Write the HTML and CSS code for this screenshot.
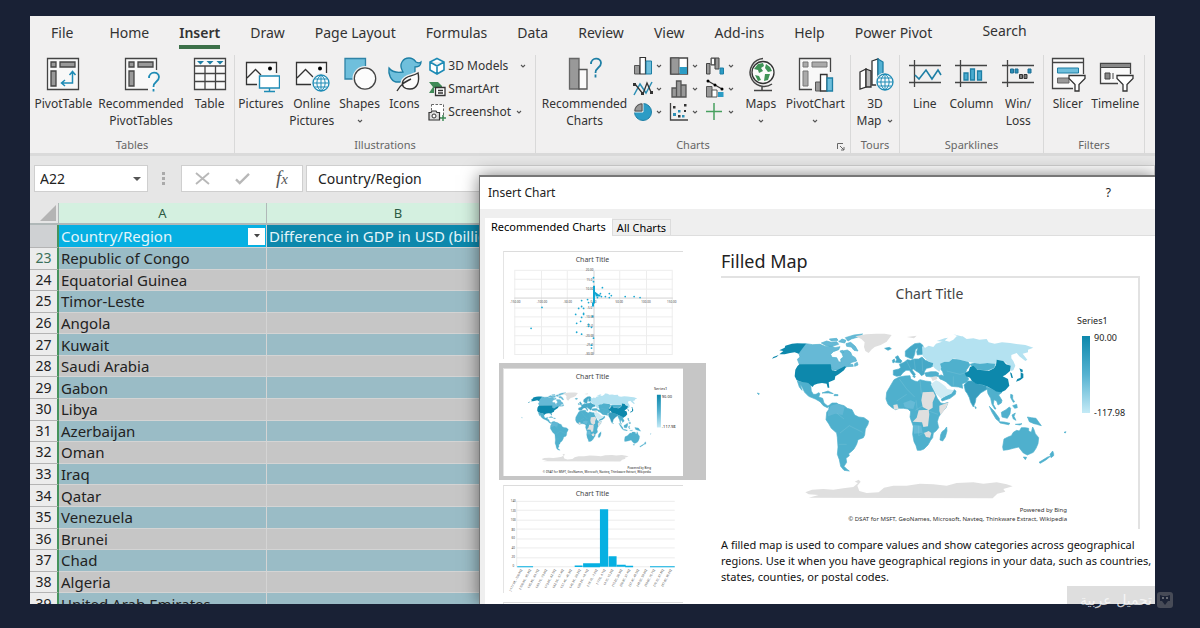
FILE: index.html
```html
<!DOCTYPE html>
<html lang="en">
<head>
<meta charset="utf-8">
<title>Insert Chart</title>
<link rel="stylesheet" href="styles.css">
</head>
<body>
<svg class="defs" aria-hidden="true">
  <symbol id="chev" viewBox="0 0 8 6"><path d="M2 2l2 2 2-2" fill="none" stroke="#555" stroke-width="1.1"/></symbol>
  <symbol id="globe" viewBox="0 0 18 18"><circle cx="9" cy="9" r="8" fill="#f4fafc" stroke="#1e8bb5" stroke-width="1.3"/><path d="M1 9h16M9 1v16M2.5 5h13M2.5 13h13M9 1C3.500 5 3.500 13 9 17M9 1c5.500 4 5.500 12 0 16" fill="none" stroke="#1e8bb5"/></symbol>
  <symbol id="world" viewBox="0 0 1020 600">
    <g fill="#4fb0cd" stroke="#4fb0cd" stroke-width="2" stroke-linejoin="round">
      <path fill="#66b9d6" d="M176 100L198 98 218 101 240 100 258 107 272 104 285 110 300 107 296 116 280 122 272 130 276 139 290 140 296 152 303 154 302 144 310 138 306 128 308 120 322 117 332 124 336 134 346 140 350 150 336 154 326 161 338 160 340 166 322 167 312 170 298 176 278 178 272 162 178 160 172 145 180 138 176 126Z"/>
      <path fill="#66b9d6" d="M244 96l16-6 14 4 16-2 6 8-20 6-18-2zM268 84l22-2 4 6-20 2zM296 92l10-8 12 4-4 8zM316 80l26-8 26-3-14 9-20 6-10 6zM318 98l14-4 14 12 8 14-12-2-8-10-14-2zM300 120l8-2 4 6-8 2zM344 158l8-4 2 8-10 4z"/>
      <path d="M172 210L188 214 204 216 212 222 214 240 220 250 228 250 236 245 240 248 236 258 248 262 252 276 262 284 270 284 262 290 250 284 240 272 226 264 206 256 194 244 186 228 180 218 186 238 178 228ZM246 246l18-6 16 8-14-2zM284 250l10 1v3h-12z"/>
      <path d="M268 282L276 276 290 276 296 280 312 284 322 292 336 296 344 312 356 318 372 320 386 330 384 340 376 354 374 372 370 380 354 386 350 400 342 414 336 420 326 428 328 434 318 442 320 454 312 466 320 474 328 480 312 478 302 466 298 446 292 430 294 408 292 380 290 366 274 352 266 338 258 326 260 304 266 296Z"/>
      <path fill="#62b7d4" stroke="none" d="M272 284l20-6 22 10-6 24-22-4-22 8 0-14z"/>
      <path d="M462 206L470 202 478 198 494 195 510 194 512 204 524 210 532 212 540 206 556 210 572 212 576 228 584 244 592 262 602 276 612 278 624 274 618 290 604 306 596 318 592 332 596 350 588 360 580 366 578 380 572 388 564 402 552 414 542 418 532 418 528 404 522 392 518 370 520 346 514 330 510 318 512 302 504 294 490 292 478 292 466 296 456 290 444 280 438 264 440 244 448 230ZM606 362l8-6 6-8 1 12-5 18-8 12-8-3 2-16z"/>
      <path fill="#66bad6" stroke="none" d="M490 276l22-8 14 6-6 20-16-2-10-4zM520 342l24 2 4 22-26 2z"/>
      <path fill="#45a8c7" d="M460 178L476 174 482 170 478 160 492 154 502 146 512 148 522 144 536 144 546 138 556 148 568 152 580 156 578 166 570 170 560 172 554 180 552 190 544 194 538 186 528 180 520 174 516 176 526 190 522 196 514 186 508 178 498 178 488 186 482 194 470 196 460 192ZM466 154l4-8-4-8 8-4 4 8 8 8-4 6zM457 148l6-4 2 8-6 4zM496 136l0-16 14-12 14-10 16-2 8 6 4 14-4 14-16 2-2-10 4-12-8 6-2 14-6 14-8-2zM434 112l14-3 6 4-10 5zM518 196l8 0-2 4z"/>
      <path d="M554 186L572 182 588 182 596 186 594 196 578 198 558 196ZM600 158L614 152 625 152 636 144 660 146 684 152 690 162 680 176 676 188 686 204 680 214 666 218 668 232 656 228 634 226 626 220 618 212 606 206 600 204 594 194 604 192 612 196 608 182 602 174ZM604 264l30-18 8-10 6 4-2 10-16 12-24 8z"/>
      <path d="M690 160L704 156 720 158 742 156 766 158 762 170 744 178 716 176 700 170Z"/>
      <path fill="#379dbe" d="M672 222L684 210 696 210 712 218 738 224 742 234 732 240 722 246 708 262 706 274 700 288 692 274 688 260 682 248 676 240ZM704 286l5 4-2 3z"/>
      <path d="M740 228L756 234 772 242 786 244 776 252 786 268 784 276 774 282 770 270 762 266 760 280 768 294 764 294 756 280 752 262 744 248ZM748 286l14 14 16 22 0 10-10-8-12-20zM784 304l14-8 10-8 4 4-2 16-8 14-16-4zM778 332l14 1 18 4-4 4-26-5zM816 312l10-6-4 10 6 12-8-4zM826 340l20-2-6 4zM862 318l12 2 14 2 10 14 6 8-14-4-8-2-14-6-4-10zM812 250l6 2 0 12 6 8-4 2-8-14zM818 284l12-4 2 10-8 2z"/>
      <path d="M792 384L804 378 814 374 820 364 830 358 838 360 844 350 856 350 866 352 866 360 874 364 878 348 882 356 886 368 896 380 894 398 888 412 880 424 862 432 850 426 842 416 836 408 820 412 804 416 790 418 788 408ZM850 438l10 1-4 7zM897 454l26-16 8-2-12 10-18 11zM930 430l8-10 3 8 0 6-8 6z"/>
      <path d="M52 246l6 2-2 3zM972 364l6-2-2 4z"/>
    </g>
    <g fill="#b4e2f1"><path d="M546 106L556 110 566 104 580 108 588 98 602 94 612 88 628 92 640 86 650 76 668 76 680 84 700 82 718 86 740 84 746 94 764 98 786 94 810 96 836 100 856 102 880 110 864 116 864 124 848 128 862 146 856 150 838 136 830 126 814 132 814 142 820 150 826 164 820 178 812 180 808 164 790 150 770 148 766 158 742 156 720 158 704 156 684 152 660 146 640 142 628 152 612 152 600 158 604 170 598 182 584 172 578 164 580 156 566 152 548 136ZM590 90l24-8 10-2-14 12zM640 70l24 6 0 4z"/><path fill="#cfebf4" d="M572 220L588 208 598 212 616 226 622 234 642 238 634 248 602 262 588 248Z"/></g>
    <g fill="#0d88ac"><path d="M198 98L180 122 176 128 164 124 150 126 134 130 118 130 130 120 118 118 134 110 136 104 156 98 172 97ZM100 138l16-6-6 6-14 5z"/><path d="M178 160L272 160 276 178 286 180 298 174 314 166 318 168 312 178 296 190 286 196 284 206 266 214 268 230 263 230 260 218 246 216 232 218 222 222 218 228 204 216 188 214 170 208 164 196 166 176 172 166Z"/><path d="M674 186L686 180 690 168 700 164 712 176 730 178 746 180 762 172 768 162 770 146 790 150 798 160 812 164 810 180 796 192 788 196 804 204 808 224 796 238 784 244 770 242 756 234 740 226 730 222 708 218 696 210 690 200 678 196ZM838 172l10 4 0 8-6-2zM842 184l8 4 0 12-10 8-12 4 4-8 10-4zM810 184l5 3 4 14-5-1z"/></g>
    <g fill="#dfdfdf"><path d="M346 76L378 70 408 68 434 68 455 72 446 84 440 92 422 102 404 108 394 116 386 126 376 120 372 108 374 94 364 84ZM500 78l30-4-8 8zM548 244L580 242 586 254 578 274 578 290 566 298 548 288 544 268ZM536 298L566 296 568 310 564 346 550 348 546 334 518 332 530 320ZM598 284L626 274 618 290 602 312 598 300ZM460 282l12-2 4 14-14 2zM552 366l14-6 8 6-4 14-12-2zM572 198l18-2 2 8-14 6zM196 544L216 536 250 534 280 536 310 532 340 528 354 516 344 512 356 506 362 512 352 524 358 540 380 546 416 544 432 530 460 524 500 524 540 518 580 520 620 524 650 516 700 514 730 518 770 514 800 520 818 526 790 534 796 542 772 548 758 562 206 560 236 552 206 550Z"/></g>
    <g fill="none" stroke="#fff" stroke-opacity=".2" stroke-width="1.500"><path d="M478 204l22 30 24 24M540 208l4 40M500 250l-30 20M526 298l20-12M536 344v30l20-10M292 308l20 16M300 366l28-22 40 20M296 400l24 0M500 150l12 24M522 144l4 32M546 140l2 40M620 180l40 10 22-6M640 196l0 28M528 268l4 30M566 300l28 10"/></g>
  </symbol>
</svg>

<main class="window">
  <nav class="tabs" aria-label="Ribbon tabs">
    <a href="#">File</a><a href="#">Home</a><a href="#" class="on" aria-current="page">Insert</a><a href="#">Draw</a><a href="#">Page Layout</a><a href="#">Formulas</a><a href="#">Data</a><a href="#">Review</a><a href="#">View</a><a href="#">Add-ins</a><a href="#">Help</a><a href="#">Power Pivot</a><a href="#" class="search">Search</a>
  </nav>

  <div class="ribbon">
    <section class="group tables">
      <div class="tools">
        <button class="tool"><svg viewBox="0 0 38 38" class="big"><g fill="#f8f8f8" stroke="#444" stroke-width="1.300"><path d="M3.500 2.500h31v31h-31z"/><path fill="#999" d="M7 6h5v5H7zM16 6h15v5H16zM7 15h5v15H7z"/></g><path d="M28.500 16v11H18M25.500 19l3-3.500 3 3.500M21 24l-3.500 3 3.500 3" fill="none" stroke="#1e8bb5" stroke-width="1.500"/></svg>PivotTable</button>
        <button class="tool"><svg viewBox="0 0 38 38" class="big"><g fill="#f8f8f8" stroke="#444" stroke-width="1.300"><path stroke="none" d="M3 3h31v31H3z"/><path fill="none" d="M34.500 14V2.500h-31v31H26"/><path fill="#999" d="M7 6h5v5H7zM16 6h15v5H16zM7 15h5v15H7z"/></g><path d="M27 22c0-7 10-7 10-1 0 5-5.500 4-5.500 10M31.500 33v2.500" fill="none" stroke="#1e8bb5" stroke-width="1.800"/></svg><span>Recommended<br>PivotTables</span></button>
        <button class="tool"><svg viewBox="0 0 38 38" class="big"><path fill="#fafafa" stroke="#444" stroke-width="1.300" d="M3.500 2.500h31v31h-31zM3.500 10h31M3.500 17.500h31M3.500 25.500h31M14 10v23M24.500 10v23"/><path fill="#1e7fa5" d="M6 5h7l-3.500 3.500zM15.500 5h7L19 8.500zM25.500 5h7L29 8.500z"/></svg>Table</button>
      </div>
      <h2>Tables</h2>
    </section>

    <section class="group illus">
      <div class="tools">
        <button class="tool"><svg viewBox="0 0 38 38" class="big"><path fill="#fafafa" stroke="#333" stroke-width="1.300" d="M15 28.500H4.500v-22h30V17M5 22l8.500-8.500L19 19"/><circle cx="28" cy="12.500" r="2"/><path fill="#fff" stroke="#1e8bb5" stroke-width="1.400" d="M17.500 20h20v12h-20zM27.500 32v3.500M22 35.500h11"/></svg>Pictures</button>
        <button class="tool"><svg viewBox="0 0 38 38" class="big"><path fill="#fafafa" stroke="#333" stroke-width="1.300" d="M18 28.500H3.500v-22h30V17M4 22l8.500-8.500L20 21"/><circle cx="27" cy="12.500" r="2"/><circle cx="28" cy="27" r="10" fill="#f1f0f0"/><use href="#globe" x="19" y="18" width="18" height="18"/></svg><span>Online<br>Pictures</span></button>
        <button class="tool"><svg viewBox="0 0 38 38" class="big"><path fill="#6fbfdc" stroke="#2f83a6" stroke-width="1.300" d="M4 2.500h20.500V23H4z"/><circle cx="24" cy="22.500" r="12.500" fill="#f1f0f0"/><circle cx="24" cy="22.500" r="10.700" fill="#fcfcfc" stroke="#444" stroke-width="1.300"/></svg>Shapes<svg class="chev"><use href="#chev"/></svg></button>
        <button class="tool"><svg viewBox="0 0 38 38" class="big"><path fill="#6fbfdc" stroke="#1e7fa5" stroke-width="1.300" d="M17 14c-3-6 1-12 7-12 5 0 6 3 7 4 2 1 4 1 5 0 0 4-3 5-6 5v6l-7 9H11C6 25 3 18 4 12c3 4 8 5 14 4z"/><path fill="#fcfcfc" stroke="#f1f0f0" stroke-width="4" d="M33 17c2 9-1 16-8 16-6 0-9-3-7-8 3-6 9-4 15-8z"/><path fill="#fcfcfc" stroke="#333" stroke-width="1.400" d="M33 17c2 9-1 16-8 16-6 0-9-3-7-8 3-6 9-4 15-8zM12 35c4-7 8-9 14-12"/></svg>Icons</button>
        <div class="rows">
          <button><svg viewBox="0 0 18 18"><path fill="#fff" stroke="#1e8bb5" stroke-width="1.600" d="M9 1.500l7 3.500v8l-7 4-7-4V5zM2 5l7 4 7-4M9 9v8"/></svg>3D Models<svg class="chev"><use href="#chev"/></svg></button>
          <button><svg viewBox="0 0 18 18"><path fill="#3f8a57" d="M1 2h9l4 4v2H6v5H1l4-6z"/><path fill="#fff" stroke="#333" stroke-width="1.300" d="M7.500 7.500h9.500v8H7.500zM10 10.500h5M10 13h5"/></svg>SmartArt</button>
          <button><svg viewBox="0 0 18 18"><path fill="#fff" stroke="#666" stroke-dasharray="2.500 1.500" d="M3.500 1.500h12v13h-12z"/><path fill="#ddd" stroke="#333" stroke-width="1.200" d="M1 9.500h2l1-1.500h4l1 1.500h2.500V17H1z"/><circle cx="6" cy="13" r="2" fill="#fff" stroke="#333"/><path stroke="#3f8a57" stroke-width="1.500" d="M15 12v6M12 15h6"/></svg>Screenshot<svg class="chev near"><use href="#chev"/></svg></button>
        </div>
      </div>
      <h2>Illustrations</h2>
    </section>

    <section class="group charts">
      <div class="tools">
        <button class="tool"><svg viewBox="0 0 38 38" class="big"><path fill="#999" stroke="#666" stroke-width="1.300" d="M3.500 2.500H13V33H3.500z"/><path fill="#fafafa" stroke="#555" stroke-width="1.300" d="M13 13.500h8V33h-8z"/><path d="M25 8c0-7 10-7 10-1 0 5-5.500 4-5.500 10M29.500 18.500v3" fill="none" stroke="#1e7fa5" stroke-width="1.800"/></svg><span>Recommended<br>Charts</span></button>
        <div class="kinds">
          <button aria-label="Column chart"><svg viewBox="0 0 20 20"><path fill="#999" stroke="#555" d="M1.500 9.500h5V18h-5z"/><path fill="#fff" stroke="#333" stroke-width="1.200" d="M7 1.500h5.500V18H7z"/><path fill="#6fbfdc" stroke="#1e7fa5" d="M13 5h5.500v13H13z"/></svg><svg class="chev"><use href="#chev"/></svg></button>
          <button aria-label="Hierarchy chart"><svg viewBox="0 0 20 20"><path fill="#fff" stroke="#444" stroke-width="1.300" d="M1.500 2h17v16h-17z"/><path fill="#999" stroke="#555" d="M2 2h8v16H2z"/><path fill="#2c9cc5" d="M10.500 11H18v7h-7.500z"/></svg><svg class="chev"><use href="#chev"/></svg></button>
          <button aria-label="Waterfall chart"><svg viewBox="0 0 20 20"><path fill="#999" stroke="#444" d="M1.500 7.500H5V18H1.500zM6 2h4v7H6zM10 2h4v11h-4z"/><path fill="#fff" d="M7 3h2v5H7z"/><path fill="#2c9cc5" stroke="#1e7fa5" d="M15 12h3.500v6H15z"/></svg><svg class="chev"><use href="#chev"/></svg></button>
          <button aria-label="Line chart"><svg viewBox="0 0 20 20"><path fill="none" stroke="#2c8fb5" stroke-width="1.500" d="M1 16L7 5l6 9 6-11"/><path fill="none" stroke="#333" stroke-width="1.300" d="M2 5l8 10 4-11 4 9"/><path fill="#333" d="M0 4h3v3H0zM17 12h3v3h-3zM8 13h3v3H8z"/></svg><svg class="chev"><use href="#chev"/></svg></button>
          <button aria-label="Statistic chart"><svg viewBox="0 0 20 20"><path fill="#999" stroke="#555" stroke-width="1.300" d="M3 9h4.500v9H3zM7.500 2H12v16H7.500zM12 6h5v12h-5z"/></svg><svg class="chev"><use href="#chev"/></svg></button>
          <button aria-label="Combo chart"><svg viewBox="0 0 20 20"><path fill="#999" stroke="#555" d="M1.500 7.500H7V18H1.500z"/><path fill="#fff" stroke="#555" d="M7 11h5v7H7z"/><path fill="#2c9cc5" d="M13 13h5.500v5H13z"/><path fill="none" stroke="#333" stroke-width="1.300" d="M3 2l7 4 7 4"/><circle cx="3" cy="2" r="1.500"/><circle cx="10" cy="6" r="1.500"/><circle cx="17" cy="10" r="1.500"/></svg><svg class="chev"><use href="#chev"/></svg></button>
          <button aria-label="Pie chart"><svg viewBox="0 0 20 20"><circle cx="10" cy="10" r="8.500" fill="#2c9cc5" stroke="#1e7fa5"/><path fill="#999" stroke="#f1f0f0" d="M10 10V.500C4 .500.500 5 .500 10z"/><path fill="none" stroke="#555" d="M9 9V2C5 2 2 5 2 9z"/></svg><svg class="chev"><use href="#chev"/></svg></button>
          <button aria-label="Scatter chart"><svg viewBox="0 0 20 20"><path fill="none" stroke="#444" stroke-width="1.300" d="M1.500 1v17H19"/><path fill="#2c8fb5" d="M4 11h3v3H4zM9 8h2.500v2.500H9zM13 13h2.500v2.500H13z"/><path fill="#333" d="M4 4h2.500v2.500H4zM9 13h2.500v2.500H9zM15 2h2.500v2.500H15zM15 8h2v2h-2z"/></svg><svg class="chev"><use href="#chev"/></svg></button>
          <button aria-label="More charts"><svg viewBox="0 0 20 20"><path fill="none" stroke="#48a05f" stroke-width="1.500" d="M9 1v17M1 9.500h16"/></svg><svg class="chev"><use href="#chev"/></svg></button>
        </div>
        <button class="tool"><svg viewBox="0 0 38 38" class="big"><circle cx="21" cy="16.500" r="11" fill="#fafafa" stroke="#333" stroke-width="1.300"/><path fill="#3f9357" d="M12 13l4-5 5-1 1 3-3 2 2 3-4 2-1-3zM24 8l4 3 2 4-4 1-3-4zM23 18l5 0-2 6-4 1zM13 19l4 1 2 4-3 1z"/><path d="M21 2.500A14 14 0 1 0 30 28M20 31v3M12 34.500h18" fill="none" stroke="#444" stroke-width="1.500"/></svg>Maps<svg class="chev"><use href="#chev"/></svg></button>
        <button class="tool"><svg viewBox="0 0 38 38" class="big"><path fill="#f8f8f8" stroke="#444" stroke-width="1.300" d="M16 33.500H3.500v-31h31V16"/><path fill="#aaa" stroke="#777" d="M7 6h5v5H7zM16 6h15v5H16zM7 15h5v15H7z"/><path fill="#999" stroke="#555" d="M19.500 26h5v9h-5z"/><path fill="#fff" stroke="#333" stroke-width="1.300" d="M24.500 18.500H31V35h-6.500z"/><path fill="#6fbfdc" stroke="#1e7fa5" stroke-width="1.300" d="M31 22h5.500v13H31z"/></svg>PivotChart<svg class="chev"><use href="#chev"/></svg></button>
      </div>
      <h2>Charts</h2>
      <button class="launch" aria-label="Charts options"><svg viewBox="0 0 8 8"><path fill="none" stroke="#666" d="M.500 6V.500H6M3 3l4 4M7 4v3H4"/></svg></button>
    </section>

    <section class="group tours">
      <div class="tools">
        <button class="tool"><svg viewBox="0 0 38 38" class="big"><path fill="#fff" stroke="#333" stroke-width="1.300" d="M4 16l6-3v18l-6 2z"/><path fill="#bbb" stroke="#333" stroke-width="1.300" d="M10 13l5 2v16l-5 0z"/><path fill="#fff" stroke="#333" stroke-width="1.300" d="M16 5l6-2v26h-6z"/><path fill="#55b2d3" stroke="#1e7fa5" stroke-width="1.300" d="M22 3l5 3v16l-5 6z"/><circle cx="29" cy="26" r="9.500" fill="#f1f0f0"/><use href="#globe" x="20" y="17" width="18" height="18"/></svg><span>3D</span><span class="with">Map<svg class="chev"><use href="#chev"/></svg></span></button>
      </div>
      <h2>Tours</h2>
    </section>

    <section class="group spark">
      <div class="tools">
        <button class="tool"><svg viewBox="0 0 38 38" class="big"><path stroke="#444" stroke-width="1.300" d="M8.500 4v27M3 9.500h32M3 26.500h32"/><path fill="none" stroke="#1e7fa5" stroke-width="1.600" d="M9 19l4 4 7-9 6 9 6-9 3 5"/></svg>Line</button>
        <button class="tool"><svg viewBox="0 0 38 38" class="big"><path stroke="#444" stroke-width="1.300" d="M8.500 4v27M3 9.500h32M3 26.500h32"/><path fill="#4aabcf" stroke="#1e7fa5" stroke-width="1.300" d="M12 17h4v7h-4zM18.500 13h4v11h-4zM25.500 15h4v9h-4z"/></svg>Column</button>
        <button class="tool"><svg viewBox="0 0 38 38" class="big"><path stroke="#444" stroke-width="1.300" d="M8.500 4v27M3 9.500h32M3 26.500h32"/><path fill="#2c8fb5" stroke="#1e6f95" d="M11.500 13h3v4h-3zM16 13h3v4h-3zM29 13h3v4h-3z"/><path fill="#777" stroke="#333" d="M20.500 18.500h3v4h-3zM25 18.500h3v4h-3z"/></svg><span>Win/<br>Loss</span></button>
      </div>
      <h2>Sparklines</h2>
    </section>

    <section class="group filters">
      <div class="tools">
        <button class="tool"><svg viewBox="0 0 38 38" class="big"><path fill="#fafafa" stroke="#444" stroke-width="1.300" d="M24 32.500H3.500v-30h31V18M4 6.500h30"/><path fill="#6fbfdc" stroke="#1e7fa5" d="M8.500 12h21v5h-21z"/><path fill="#999" stroke="#666" d="M8.500 22H20v5H8.500z"/><path fill="#fff" stroke="#333" stroke-width="1.300" d="M20 19.500h16v3l-6 6v6.500h-4v-6.500l-6-6z"/></svg>Slicer</button>
        <button class="tool"><svg viewBox="0 0 38 38" class="big"><path fill="#fafafa" stroke="#444" stroke-width="1.300" d="M22 27.500H4.500v-20h30V18"/><path fill="#888" stroke="#444" d="M4.500 7.500h30v4h-30zM9 17h5v6H9zM17 17v6"/><path fill="#fff" stroke="#333" stroke-width="1.300" d="M21 19.500h16v3l-6 6v6.500h-4v-6.500l-6-6z"/></svg>Timeline</button>
      </div>
      <h2>Filters</h2>
    </section>
  </div>

  <div class="fbar">
    <div class="name"><input aria-label="Name box" value="A22"><button aria-label="Name list"><svg viewBox="0 0 8 6"><path fill="#555" d="M0 1h8L4 5z"/></svg></button></div>
    <svg class="dots" viewBox="0 0 4 14"><path fill="#aaa" d="M1 0h3v3H1zM1 5h3v3H1zM1 10h3v3H1z"/></svg>
    <div class="fx">
      <button aria-label="Cancel"><svg viewBox="0 0 16 14"><path fill="none" stroke="#b8b8b8" stroke-width="2" d="M1 1l14 12M15 1L1 13"/></svg></button>
      <button aria-label="Enter"><svg viewBox="0 0 16 14"><path fill="none" stroke="#b8b8b8" stroke-width="2.500" d="M1 8l4 4L15 2"/></svg></button>
      <button class="fn" aria-label="Insert function">f<small>x</small></button>
    </div>
    <input class="formula" aria-label="Formula" value="Country/Region">
  </div>

  <div class="sheet">
    <table>
      <colgroup><col class="c0"><col class="c1"><col class="c2"><col></colgroup>
      <thead><tr><th class="corner"><svg viewBox="0 0 16 16"><path fill="#b4b4b4" d="M16 0v16H0z"/></svg></th><th>A</th><th>B</th><th></th></tr></thead>
      <tbody>
        <tr class="head"><th></th><td><div class="cell">Country/Region<button aria-label="Filter"><svg viewBox="0 0 8 6"><path fill="#444" d="M1 1h6L4 4.500z"/></svg></button></div></td><td>Difference in GDP in USD (billions)</td><td></td></tr>
        <tr><th class="cur">23</th><td>Republic of Congo</td><td></td><td></td></tr>
        <tr><th>24</th><td>Equatorial Guinea</td><td></td><td></td></tr>
        <tr><th>25</th><td>Timor-Leste</td><td></td><td></td></tr>
        <tr><th>26</th><td>Angola</td><td></td><td></td></tr>
        <tr><th>27</th><td>Kuwait</td><td></td><td></td></tr>
        <tr><th>28</th><td>Saudi Arabia</td><td></td><td></td></tr>
        <tr><th>29</th><td>Gabon</td><td></td><td></td></tr>
        <tr><th>30</th><td>Libya</td><td></td><td></td></tr>
        <tr><th>31</th><td>Azerbaijan</td><td></td><td></td></tr>
        <tr><th>32</th><td>Oman</td><td></td><td></td></tr>
        <tr><th>33</th><td>Iraq</td><td></td><td></td></tr>
        <tr><th>34</th><td>Qatar</td><td></td><td></td></tr>
        <tr><th>35</th><td>Venezuela</td><td></td><td></td></tr>
        <tr><th>36</th><td>Brunei</td><td></td><td></td></tr>
        <tr><th>37</th><td>Chad</td><td></td><td></td></tr>
        <tr><th>38</th><td>Algeria</td><td></td><td></td></tr>
        <tr><th>39</th><td>United Arab Emirates</td><td></td><td></td></tr>
      </tbody>
    </table>
  </div>

  <section class="dialog" role="dialog" aria-labelledby="dlg-title">
    <header><h1 id="dlg-title">Insert Chart</h1><button aria-label="Help">?</button></header>
    <div class="dtabs" role="tablist"><button role="tab" class="on" aria-selected="true">Recommended Charts</button><button role="tab" aria-selected="false">All Charts</button></div>
    <div class="dbody">
      <div class="list">
        <button class="thumb" aria-label="Scatter">
          <svg viewBox="0 0 180 108">
            <text class="t" x="89" y="10">Chart Title</text>
            <path stroke="#ededed" fill="none" d="M10.500 19v84M37.500 19v84M63.500 19v84M116.500 19v84M143.500 19v84M169.500 19v84M10 18.500h160M10 27.500h160M10 37.500h160M10 56.500h160M10 65.500h160M10 75.500h160M10 84.500h160M10 93.500h160M10 103.500h160"/>
            <path stroke="#d2d2d2" d="M10 46.500h160M90.500 19v84"/>
            <g class="n"><text x="11" y="51">-150.00</text><text x="38" y="51">-100.00</text><text x="64" y="51">-50.00</text><text x="90" y="51">0.00</text><text x="116" y="51">50.00</text><text x="143" y="51">100.00</text><text x="169" y="51">150.00</text><text x="86" y="19">20.00</text><text x="86" y="29">15.0</text><text x="86" y="38">10.00</text><text x="86" y="58">-5.0</text><text x="86" y="67">-10.00</text><text x="86" y="76">-15.0</text><text x="86" y="86">-20.00</text><text x="86" y="95">-25.0</text><text x="86" y="104">-30.00</text></g>
            <path stroke="#0fa5d2" stroke-width="2" fill="none" d="M90.500 34v18M91 41l4 3M92 44h5M89.500 51v4"/>
            <path stroke="#1ba9d3" stroke-width="1.800" stroke-linecap="round" fill="none" d="M90 26h0M90 30h0M99 36h0M97 42h0M98 45h0M94 46h0M102 45h0M106 42h0M108 44h0M106 46h0M122 45h0M131 45h0M137 46h0M78 49h0M84 48h0M85 51h0M78 55h0M75 57h0M80 57h0M72 63h0M80 62h0M80 63h0M78 66h0M73 72h0M77 70h0M38 56h0M27 77h0M73 81h0M78 83h0M85 73h0M85 75h0M88 76h0M90 87h0M88 94h0M88 97h0M89 65h0"/>
          </svg>
        </button>
        <button class="thumb sel" aria-label="Filled Map">
          <svg viewBox="0 0 180 108">
            <text class="t" x="89" y="10">Chart Title</text>
            <use href="#world" x="10" y="14" width="144" height="85"/>
            <rect x="154" y="26" width="4" height="33" fill="url(#lg)"/>
            <g class="m"><text x="151" y="21">Series1</text><text x="159" y="29">90.00</text><text x="159" y="60">-117.98</text></g>
            <g class="m s"><text x="148" y="101">Powered by Bing</text><text x="148" y="105">© DSAT for MSFT, GeoNames, Microsoft, Navteq, Thinkware Extract, Wikipedia</text></g>
          </svg>
        </button>
        <button class="thumb" aria-label="Histogram">
          <svg viewBox="0 0 180 108">
            <text class="t" x="89" y="10">Chart Title</text>
            <path stroke="#ececec" d="M12 15.500h160M12 24.500h160M12 34.500h160M12 43.500h160M12 53.500h160M12 62.500h160M12 72.500h160M12 81.500h160M12.500 15v66"/>
            <g class="n"><text x="9" y="16">140</text><text x="9" y="26">120</text><text x="9" y="35">100</text><text x="9" y="45">80</text><text x="9" y="54">60</text><text x="9" y="64">40</text><text x="9" y="73">20</text><text x="9" y="82">0</text></g>
            <path fill="#06b0e2" d="M96.500 23.500h8.300V81.500h-8.300zM105.300 71h8v10.500h-8zM71 80.300h8v1.500h-8zM79.500 78h17v4h-17zM113.500 79.500h9v2h-9zM122 80.500h8v1.500h-8zM13 81h16v1H13zM147 81h25v1h-25z"/>
            <g class="r"><text transform="translate(18 85) rotate(-62)">[-117.98, -106.90]</text><text transform="translate(27 85) rotate(-62)">(-106.90, -95.80]</text><text transform="translate(35 85) rotate(-62)">(-95.80, -84.70]</text><text transform="translate(43 85) rotate(-62)">(-84.70, -73.60]</text><text transform="translate(52 85) rotate(-62)">(-73.60, -62.50]</text><text transform="translate(60 85) rotate(-62)">(-62.50, -51.40]</text><text transform="translate(68 85) rotate(-62)">(-51.40, -40.30]</text><text transform="translate(77 85) rotate(-62)">(-40.30, -29.20]</text><text transform="translate(85 85) rotate(-62)">(-29.20, -18.10]</text><text transform="translate(94 85) rotate(-62)">(-18.10, -7.00]</text><text transform="translate(102 85) rotate(-62)">(-7.00, 4.10]</text><text transform="translate(110 85) rotate(-62)">(4.10, 15.20]</text><text transform="translate(119 85) rotate(-62)">(15.20, 26.30]</text><text transform="translate(127 85) rotate(-62)">(26.30, 37.40]</text><text transform="translate(136 85) rotate(-62)">(37.40, 48.50]</text><text transform="translate(144 85) rotate(-62)">(48.50, 59.60]</text><text transform="translate(152 85) rotate(-62)">(59.60, 70.70]</text><text transform="translate(161 85) rotate(-62)">(70.70, 81.80]</text><text transform="translate(169 85) rotate(-62)">(81.80, 90.00]</text></g>
          </svg>
        </button>
        <button class="thumb" aria-label="Next chart"><svg viewBox="0 0 180 108"></svg></button>
      </div>
      <div class="detail">
        <h2>Filled Map</h2>
        <figure>
          <figcaption>Chart Title</figcaption>
          <div class="plot">
            <svg class="world" viewBox="0 0 1020 600" role="img" aria-label="World map"><defs><linearGradient id="lg" x1="0" y1="0" x2="0" y2="1"><stop offset="0" stop-color="#0d88ac"/><stop offset=".5" stop-color="#55b2d1"/><stop offset="1" stop-color="#c4eaf6"/></linearGradient></defs><use href="#world" width="1020" height="600"/></svg>
            <div class="legend"><span>Series1</span><div class="scale"><i></i><div><span>90.00</span><span>-117.98</span></div></div></div>
          </div>
          <p>Powered by Bing<br>© DSAT for MSFT, GeoNames, Microsoft, Navteq, Thinkware Extract, Wikipedia</p>
        </figure>
        <p class="desc">A filled map is used to compare values and show categories across geographical regions. Use it when you have geographical regions in your data, such as countries, states, counties, or postal codes.</p>
      </div>
    </div>
    <div class="shade"></div>
  </section>
</main>
<div class="mark"><span lang="ar" dir="rtl">تحميل عربية</span><svg viewBox="0 0 16 16"><rect width="16" height="16" rx="3" fill="#474b57"/><path fill="#1c2336" d="M3 3l3 1h4l3-1v6h-2l-3 4-3-4H3z"/><path fill="#666a74" d="M5 5h2v2H5zM9 5h2v2H9z"/></svg></div>
</body>
</html>
```
FILE: styles.css
```css
* { box-sizing: border-box; }
body {
  margin: 0;
  height: 100vh;
  padding: 16px 45px 24px 30px;
  background: #192135;
  color: #333;
  font-family: "Noto Sans", "Open Sans", sans-serif;
  font-size: 13px;
  position: relative;
  overflow: hidden;
}
h1, h2, p, figure { margin: 0; font-weight: 400; }
button, input { font: inherit; color: inherit; border: 0; padding: 0; margin: 0; background: none; outline: 0; min-width: 0; }
a { color: inherit; text-decoration: none; }
.defs { position: absolute; width: 0; height: 0; }
.window {
  position: relative;
  height: 100%;
  overflow: hidden;
  display: flex;
  flex-direction: column;
  background: #e6e6e6;
}

.tabs { display: flex; gap: 30px; height: 39px; padding: 5px 20px 0 21px; background: #f1f0f0; font-size: 14px; line-height: 23px; white-space: nowrap; flex: none; }
.tabs a:first-child { margin-right: 6px; }
.tabs .on { height: 28px; font-weight: 600; border-bottom: 4px solid #3c7049; }
.tabs .search { margin-left: 20px; line-height: 20px; }

.ribbon { display: grid; grid-template-columns: 205fr 301fr 315fr 49fr 144fr 101fr 10fr; height: 98px; flex: none; background: #f1f0f0; }
.group { position: relative; display: flex; flex-direction: column; justify-content: space-between; border-right: 1px solid #d9d9d9; min-width: 0; }
.group h2 { font-size: 11px; line-height: 16px; text-align: center; color: #666; }
.tools { display: grid; align-items: start; }
.tables .tools { grid-template-columns: 67fr 89fr 49fr; }
.illus .tools { grid-template-columns: 52fr 50fr 46fr 44fr 109fr; }
.charts .tools { grid-template-columns: 98fr 107fr 40fr 70fr; }
.spark .tools { grid-template-columns: 50fr 44fr 50fr; }
.filters .tools { grid-template-columns: 48fr 48fr 5fr; }
.tool { display: flex; flex-direction: column; align-items: center; font-size: 12px; line-height: 17px; white-space: nowrap; padding-top: 1px; }
.big { width: 38px; height: 38px; margin-bottom: 1px; }
.chev { width: 8px; height: 6px; flex: none; }
.tool > .chev { margin-top: 6px; }
.with { display: flex; align-items: center; gap: 4px; }
.rows { display: grid; grid-auto-rows: 23px; padding-left: 2px; }
.rows button { display: flex; align-items: center; gap: 2px; font-size: 12px; line-height: 18px; padding-bottom: 2px; white-space: nowrap; }
.rows svg:first-child { width: 18px; height: 18px; }
.rows .chev { margin-left: 9px; }
.rows .near { margin-left: 2px; }
.kinds { display: grid; grid-template-columns: repeat(3, 36px); grid-auto-rows: 23px; }
.kinds button { display: flex; align-items: center; gap: 2px; padding-bottom: 1px; }
.kinds svg:first-child { width: 20px; height: 20px; }
.launch { position: absolute; right: 5px; bottom: 2px; line-height: 0; }
.launch svg { width: 8px; height: 8px; }

.fbar { display: flex; align-items: center; flex: none; height: 50px; padding: 0 0 2px 4px; border-top: 3px solid #dadada; font-size: 14px; color: #222; }
.name, .fx, .formula { height: 27px; background: #fff; border: 1px solid #cfcfcf; }
.name { display: flex; width: 114px; padding: 0 6px 0 5px; align-items: center; }
.name input { flex: 1; }
.name svg { width: 8px; height: 6px; display: block; }
.dots { width: 4px; height: 14px; margin: 0 16px 0 13px; }
.fx { display: flex; width: 122px; align-items: center; }
.fx button { flex: 1; display: flex; justify-content: center; align-items: baseline; }
.fx svg { width: 15px; height: 13px; display: block; }
.fx .fn { font: italic 19px/20px "Liberation Serif", serif; color: #555; }
.fn small { font-size: 15px; }
.formula { flex: 1; margin-left: 3px; padding-left: 11px; }

.sheet { flex: 1; overflow: hidden; min-height: 0; }
table { border-collapse: separate; border-spacing: 0; table-layout: fixed; width: 100%; height: 412px; font-size: 14px; line-height: 18px; color: #222; }
.c0 { width: 29px; }
.c1 { width: 208px; }
.c2 { width: 263px; }
th { font-weight: 400; padding: 0; }
thead th { height: 22px; background: #d4f0e0; border-right: 1px solid #b0b8b8; border-bottom: 2px solid #b0b8b8; font-size: 13px; color: #2c5b43; }
thead .corner { background: #e6e6e6; text-align: right; line-height: 0; padding-right: 2px; }
.corner svg { width: 16px; height: 16px; }
tbody th { background: #ececec; border-right: 2px solid #46935c; border-bottom: 1px solid #b4b4b4; }
tbody .cur { color: #3b705a; }
td { padding: 0 0 0 2px; background: #c6c6c6; border-right: 1px solid #d4d4d4; border-bottom: 1px solid #d4d4d4; font-size: 15px; white-space: nowrap; overflow: hidden; }
tbody tr:nth-child(even) td { background: #9abcc6; }
.head th { background: #cfd1d3; }
tbody .head td { height: 23px; background: #0d88ac; color: #e4f5fa; }
tbody .head td:nth-child(2) { background: #06b0e2; padding-right: 1px; }
.cell { display: flex; justify-content: space-between; align-items: center; }
.cell button { width: 17px; height: 17px; background: #fff; display: grid; place-items: center; }
.cell svg { width: 8px; height: 6px; }

.dialog {
  position: absolute;
  inset: 159px 0 0 449px;
  display: flex;
  flex-direction: column;
  background: #efefef;
  border: solid #777;
  border-width: 2px 0 0 1px;
  box-shadow: 0 0 16px rgba(0, 0, 0, .5);
  overflow: hidden;
  color: #222;
}
.dialog header { display: flex; justify-content: space-between; align-items: center; flex: none; height: 32px; padding: 0 44px 1px 8px; background: #fff; font-size: 12px; }
.dialog h1 { font-size: 12px; }
.dtabs { display: flex; align-items: flex-end; flex: none; height: 27px; margin-left: 5px; font-size: 11px; white-space: nowrap; border-bottom: 1px solid #dedede; }
.dtabs button { height: 16px; padding: 0 4px; line-height: 14px; border: 1px solid #dcdcdc; border-bottom: 0; color: #000; }
.dtabs .on { height: 18px; padding: 0 5px 2px; background: #fff; margin-bottom: -1px; border-color: #fff; }
.dbody { display: flex; flex: 1; min-height: 0; margin-left: 5px; background: #fff; overflow: hidden; }
.list { width: 236px; flex: none; padding: 10px 15px 0 14px; }
.thumb { display: block; width: 207px; height: 117px; padding: 5px 4px; text-align: left; }
.thumb svg { display: block; width: 180px; height: 108px; border-top: 1px solid #dcdcdc; border-left: 1px solid #e4e4e4; background: #fff; }
.sel { background: #c6c6c6; }
.t { font-size: 7px; fill: #444; text-anchor: middle; }
.n { font-size: 3px; fill: #444; text-anchor: middle; }
.m { font-size: 4px; fill: #222; }
.s { font-size: 3px; text-anchor: end; }
.r { font-size: 3px; fill: #444; text-anchor: end; }
.detail { flex: 1; padding: 11px 0 0; min-width: 0; }
.detail h2 { font-size: 18px; line-height: 28px; }
figure { height: 253px; margin: 1px 15px 8px 0; border: solid #e2e2e2; border-width: 2px 2px 0 0; }
figcaption { font-size: 14px; line-height: 20px; padding-top: 6px; text-align: center; color: #444; }
.plot { display: flex; padding-left: 19px; height: 199px; }
.world { width: 340px; height: 200px; margin-top: 7px; flex: none; }
.legend { font-size: 9px; line-height: 12px; padding-top: 11px; margin-left: -3px; }
.scale { display: flex; gap: 4px; padding: 9px 0 0 5px; }
.scale i { width: 8px; height: 77px; background: linear-gradient(#0d88ac, #55b2d1 50%, #c4eaf6); }
.scale div { display: flex; flex-direction: column; justify-content: space-between; margin: -4px 0 -6px; }
figure p { font-size: 6px; line-height: 9px; text-align: right; padding: 3px 71px 0 0; color: #333; }
.desc { font-size: 11px; line-height: 16px; color: #111; }
.shade { position: absolute; right: 0; bottom: 0; width: 88px; height: 18px; background: #dedede; }
.mark { position: absolute; right: 27px; bottom: 17px; display: flex; gap: 5px; align-items: center; color: rgba(255, 255, 255, .75); font: 14px/22px "DejaVu Sans", sans-serif; }
.mark svg { width: 16px; height: 16px; }
```
